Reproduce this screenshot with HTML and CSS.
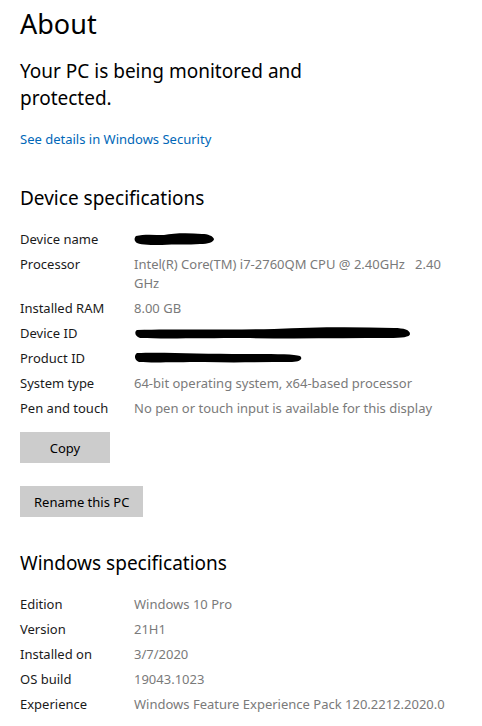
FILE: index.html
```html
<!DOCTYPE html>
<html>
<head>
<meta charset="utf-8">
<link rel="stylesheet" href="styles.css">
</head>
<body>
<div class="page">
  <h1 class="title">About</h1>
  <p class="status">Your PC is being monitored and<br>protected.</p>
  <a class="link" href="#">See details in Windows Security</a>

  <h2 class="section">Device specifications</h2>
  <div class="specs">
    <div class="row"><span class="label">Device name</span><span class="value"><svg class="blot" width="82" height="14" viewBox="0 0 82 14"><path d="M2 4 C10 2 20 3 30 3 C40 1 55 1 68 2 C74 2 79 4 80 7 C80 10 74 12 66 12 C55 13 40 12 28 13 C18 13 8 13 3 11 C0 9 0 6 2 4 Z" fill="#000"/></svg></span></div>
    <div class="row"><span class="label">Processor</span><span class="value">Intel(R) Core(TM) i7-2760QM CPU @ 2.40GHz&nbsp;&nbsp; 2.40 GHz</span></div>
    <div class="row"><span class="label">Installed RAM</span><span class="value">8.00 GB</span></div>
    <div class="row"><span class="label">Device ID</span><span class="value"><svg class="blot" width="278" height="14" viewBox="0 0 278 14"><path d="M3 4 C40 3 90 4 140 3 C180 1 220 1 260 2 C270 2 276 4 276 8 C276 11 268 12 255 12 C210 12 160 13 110 12 C70 12 30 13 6 12 C1 10 0 6 3 4 Z" fill="#000"/></svg></span></div>
    <div class="row"><span class="label">Product ID</span><span class="value"><svg class="blot" width="170" height="13" viewBox="0 0 170 13"><path d="M3 2 C30 1 70 3 110 3 C140 3 160 3 166 5 C169 7 167 11 158 11 C130 11 100 12 70 11 C40 11 20 12 5 11 C0 9 0 4 3 2 Z" fill="#000"/></svg></span></div>
    <div class="row"><span class="label">System type</span><span class="value">64-bit operating system, x64-based processor</span></div>
    <div class="row"><span class="label">Pen and touch</span><span class="value">No pen or touch input is available for this display</span></div>
  </div>
  <div class="buttons">
    <button class="btn btn-copy">Copy</button>
    <button class="btn">Rename this PC</button>
  </div>

  <h2 class="section section-win">Windows specifications</h2>
  <div class="specs">
    <div class="row"><span class="label">Edition</span><span class="value">Windows 10 Pro</span></div>
    <div class="row"><span class="label">Version</span><span class="value">21H1</span></div>
    <div class="row"><span class="label">Installed on</span><span class="value">3/7/2020</span></div>
    <div class="row"><span class="label">OS build</span><span class="value">19043.1023</span></div>
    <div class="row"><span class="label">Experience</span><span class="value">Windows Feature Experience Pack 120.2212.2020.0</span></div>
  </div>
</div>
</body>
</html>
```

FILE: styles.css
```css
html, body {
  margin: 0;
  padding: 0;
  background: #fff;
}
body {
  font-family: "Noto Sans", "Open Sans", sans-serif;
  color: #000;
}
.page {
  padding: 4px 20px 0 20px;
}
.title {
  margin: 0;
  font-weight: 400;
  font-size: 27px;
  line-height: 40px;
}
.status {
  margin: 14px 0 0 0;
  font-size: 19px;
  line-height: 27px;
}
.link {
  display: block;
  margin-top: 18px;
  font-size: 13px;
  line-height: 18px;
  color: #0067b8;
  text-decoration: none;
}
.section {
  margin: 36px 0 0 0;
  font-weight: 400;
  font-size: 19px;
  line-height: 28px;
}
.specs {
  margin-top: 15px;
  display: flex;
  flex-direction: column;
}
.row {
  display: grid;
  grid-template-columns: 114px 1fr;
  font-size: 13px;
  line-height: 19px;
  padding: 3px 0;
}
.label {
  color: #1a1a1a;
}
.value {
  color: #7a7a7a;
}
.blot {
  display: block;
  margin-top: 2px;
}
.buttons {
  display: flex;
  flex-direction: column;
  align-items: flex-start;
  gap: 23px;
  margin-top: 11px;
}
.btn {
  font-family: inherit;
  font-size: 13px;
  color: #000;
  background: #cccccc;
  border: none;
  height: 31px;
  padding: 0 14px;
}
.btn-copy {
  width: 90px;
}
.section-win {
  margin-top: 32px;
}
```
